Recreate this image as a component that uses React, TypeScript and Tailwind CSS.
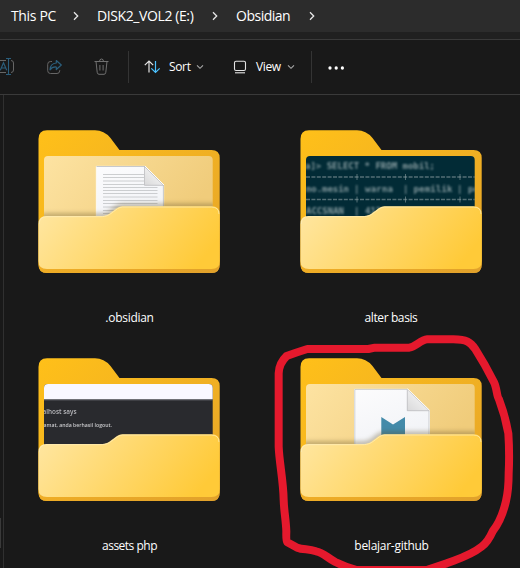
import React from "react";

type Kind = "text" | "terminal" | "dialog" | "markdown";

const FRONT =
  "M.5 94 Q.5 86 8.5 86 H62 C69 86 71 84 75 81 L79 78 Q81.500 76.300 84.500 76.300 H173.500 Q181.700 76.300 181.700 84.300";

function Preview({ kind }: { kind: Kind }) {
  if (kind === "terminal") {
    return (
      <g>
        <rect x="6" y="26" width="169" height="75" fill="#022b36" />
        <g
          className="blur-[0.9px]"
          fill="#a3b4b6"
          fillOpacity=".8"
          fontSize="9"
          fontWeight="bold"
          fontFamily="'DejaVu Sans Mono', monospace"
        >
          <text x="5" y="38.500" textLength="130" xmlSpace="preserve">{"a]> SELECT * FROM mobil;"}</text>
          <text x="6" y="61.500" textLength="43">no.mesin</text>
          <text x="65" y="61.500" textLength="28">warna</text>
          <text x="113.500" y="61.500" textLength="39">pemilik</text>
          <text x="168" y="61.500">pe</text>
          <text x="6" y="84" textLength="38">ACCSNAN</text>
          <text x="65" y="84">412</text>
          <text x="54" y="61.500">|</text>
          <text x="103" y="61.500">|</text>
          <text x="157" y="61.500">|</text>
          <text x="54" y="84">|</text>
        </g>
        <g className="blur-[0.7px]" stroke="#8a9da0" strokeOpacity=".6">
          <path d="M6 47H175M6 69.500H175" strokeDasharray="4 1.400" strokeWidth="1.300" />
          <path d="M57 44v6M105.500 44v6M160 44v6M57 66.500v6M105.500 66.500v6M160 66.500v6" />
        </g>
      </g>
    );
  }
  if (kind === "dialog") {
    return (
      <g>
        <rect x="6" y="26" width="169" height="75" fill="#292a2e" />
        <rect x="6" y="26" width="169" height="15.300" fill="#f9f8ff" />
        <path d="M6 41.800H175" stroke="#77777d" />
        <g className="blur-[0.35px]" fontFamily="'Open Sans', sans-serif" fontWeight="600">
          <text x="4.500" y="56.300" fontSize="6.500" textLength="34" lengthAdjust="spacingAndGlyphs" fill="#b8b8bc">alhost says</text>
          <text x="5.500" y="69" fontSize="5.500" textLength="68.500" lengthAdjust="spacingAndGlyphs" fill="#c9c9cc">amat, anda berhasil logout.</text>
        </g>
      </g>
    );
  }
  return (
    <g>
      <rect x="6" y="26" width="169" height="75" fill="url(#paper)" />
      {kind === "text" ? (
        <g>
          <path d="M58.300 36.300H107L125.700 55V100H58.300Z" fill="url(#sheet)" stroke="#fff" strokeWidth=".7" />
          <path d="M58.500 36.500H107M125.400 55V90" stroke="#b9bcc2" strokeWidth=".8" fill="none" />
          <path
            d="M65 44.500H106M65 47.500H106M65 51H106M65 54.500H106M65 57.500H119.500M65 60.500H119.500M65 63.500H119.500M65 67H119.500M65 70.500H119.500M65 73.500H119.500M65 77H119.500M65 80.500H80M65 83.500H75"
            stroke="#c6c8cb"
            strokeWidth=".9"
          />
          <path d="M106.500 36.500V55.300H125.500Z" fill="url(#fold)" stroke="#b4b4b7" strokeWidth=".7" />
          <path d="M107 36L126 55" stroke="#fff" strokeWidth=".9" />
        </g>
      ) : (
        <g>
          <path d="M54.500 31.300H107.500L129.500 52.700V100H54.500Z" fill="url(#sheet)" stroke="#fff" strokeWidth=".9" />
          <path d="M54.800 100V31.400H107M129 52.700V100" stroke="#b9bcc2" strokeWidth=".7" fill="none" />
          <path d="M107.300 31.400V52.700H129.300Z" fill="url(#fold)" stroke="#b4b4b7" strokeWidth=".7" />
          <path d="M107.500 30.800L129.600 52.300" stroke="#fff" strokeWidth=".9" />
          <path d="M81.300 59.100L93 66.600L105 59.100V90H81.300Z" fill="#438aa9" />
        </g>
      )}
    </g>
  );
}

function Folder({ kind }: { kind: Kind }) {
  return (
    <svg width="182" height="143" viewBox="0 0 182 143" className="block">
      <path
        d="M.5 9Q.5.3 9 .3H57Q66 .3 72.500 8L81.500 20H173.500Q181.700 20 181.700 28V134.500Q181.700 143 173.500 143H9Q.5 143 .5 134.500Z"
        fill="url(#back)"
      />
      <g clipPath="url(#window)">
        <Preview kind={kind} />
        {(kind === "text" || kind === "markdown") && (
          <path className="blur-[2.5px]" d={FRONT} fill="none" stroke="#5a4a20" strokeOpacity=".5" strokeWidth="4" />
        )}
      </g>
      <path d="M181.700 84V134.500Q181.700 143 173.500 143H9Q.5 143 .5 134.500V94Z" fill="url(#edge)" />
      <path d={FRONT + "V131Q181.700 139 173.500 139H9Q.5 139 .5 131Z"} fill="url(#front)" />
      <path d="M1.200 94Q1.200 86.700 8.500 86.700H62C69 86.700 71.500 84.700 75.400 81.700L79.500 78.700Q82 77 84.500 77H173.500Q181 77 181 84" fill="none" stroke="#fff0bd" strokeOpacity=".7" />
    </svg>
  );
}

function Defs() {
  return (
    <svg width="0" height="0" className="absolute" aria-hidden="true">
      <defs>
        <linearGradient id="back" x1="0" y1="0" x2="1" y2=".8">
          <stop offset="0" stopColor="#ffc019" />
          <stop offset="1" stopColor="#e8a728" />
        </linearGradient>
        <linearGradient id="front" x1="0" y1="76" x2="125" y2="178" gradientUnits="userSpaceOnUse">
          <stop offset="0" stopColor="#ffe7a4" />
          <stop offset="1" stopColor="#ffca38" />
        </linearGradient>
        <linearGradient id="edge">
          <stop offset="0" stopColor="#efad25" />
          <stop offset="1" stopColor="#e1a12b" />
        </linearGradient>
        <linearGradient id="paper" x1="0" y1="0" x2="1" y2=".35">
          <stop offset="0" stopColor="#fde3a2" />
          <stop offset="1" stopColor="#f0cc7b" />
        </linearGradient>
        <linearGradient id="sheet" x1="0" y1="0" x2=".4" y2="1">
          <stop offset="0" stopColor="#fcfcfd" />
          <stop offset="1" stopColor="#f0f2f6" />
        </linearGradient>
        <linearGradient id="fold" x1="0" y1="1" x2=".7" y2=".2">
          <stop offset="0" stopColor="#d9d9da" />
          <stop offset="1" stopColor="#f5f5f5" />
        </linearGradient>
        <clipPath id="window">
          <path d="M6 100V30Q6 26 10 26H170.700Q174.700 26 174.700 30V100Z" />
        </clipPath>
      </defs>
    </svg>
  );
}

function Crumb({ text, width, className }: { text: string; width: string; className: string }) {
  return (
    <span className={"shrink-0 whitespace-nowrap text-[14px] leading-[32px] text-white " + width + " " + className}>
      {text}
    </span>
  );
}

function ChevronRight({ className }: { className: string }) {
  return (
    <svg width="6" height="10" viewBox="0 0 6 10" className={"shrink-0 " + className} fill="none" stroke="#e8e8e8" strokeWidth="1.300">
      <path d="M1 1.300L4.700 5L1 8.700" />
    </svg>
  );
}

function ChevronDown() {
  return (
    <svg width="8" height="6" viewBox="0 0 8 6" className="shrink-0" fill="none" stroke="#a9a9a9" strokeWidth="1.100">
      <path d="M1 1.300L4 4.300L7 1.300" />
    </svg>
  );
}

const folders: { name: string; kind: Kind; spacing: string }[] = [
  { name: ".obsidian", kind: "text", spacing: "tracking-[-0.28px] pl-px" },
  { name: "alter basis", kind: "terminal", spacing: "tracking-[-0.4px]" },
  { name: "assets php", kind: "dialog", spacing: "tracking-[-0.5px] pl-px" },
  { name: "belajar-github", kind: "markdown", spacing: "tracking-[-0.27px] pl-px" },
];

export default function App() {
  return (
    <div className="relative flex h-[568px] w-[520px] flex-col overflow-hidden bg-[#191919] font-['Open_Sans','Noto_Sans',sans-serif]">
      <Defs />
      <nav className="flex h-8 shrink-0 items-center bg-[#2c2c2c] pl-[11px]">
        <Crumb text="This PC" width="w-[62px]" className="tracking-[-0.35px]" />
        <ChevronRight className="mr-[18px]" />
        <Crumb text="DISK2_VOL2 (E:)" width="w-[115px]" className="tracking-[-0.4px]" />
        <ChevronRight className="mr-[18px]" />
        <Crumb text="Obsidian" width="w-[73px]" className="tracking-[-0.5px]" />
        <ChevronRight className="" />
      </nav>
      <div className="h-[7px] shrink-0 bg-[#202020]" />
      <div className="flex h-14 shrink-0 items-center border-y border-[#3a3a3a] text-[12px] text-white">
        <svg width="15" height="18" viewBox="0 0 15 18" className="shrink-0" fill="none">
          <path d="M0 2.500H6M0 14.500H6M11 2.500Q13.500 2.500 13.500 5V12Q13.500 14.500 11 14.500" stroke="#666" />
          <path d="M6 .5H11M8.500 .5V16.500M6 16.500H11M.3 12.300L3.500 4.700L6.700 12.300M1.300 10H5.700" stroke="#2b5f7d" strokeWidth="1.100" />
        </svg>
        <svg width="16" height="16" viewBox="0 0 16 16" className="ml-8 shrink-0" fill="none">
          <path d="M5 2.500H3.500Q.700 2.500 .700 5.300V11.700Q.700 14.500 3.500 14.500H10Q12.700 14.500 12.700 11.700V11" stroke="#666" />
          <path d="M9.300 1.500L14.300 6L9.300 10.500V8Q5 7.700 3 10.800Q3.200 4.600 9.300 4Z" stroke="#2b5f7d" strokeWidth="1.200" strokeLinejoin="round" />
        </svg>
        <svg width="16" height="18" viewBox="0 0 16 18" className="ml-[31px] shrink-0" fill="none" stroke="#707070">
          <path d="M.5 3.500H14.500M5.500 3.500Q5.500 1 7.500 1Q9.500 1 9.500 3.500M2 3.500L3.200 14.300Q3.400 16.300 5 16.300H10Q11.600 16.300 11.800 14.300L13 3.500M5.900 7V12.500M9.100 7V12.500" />
        </svg>
        <span className="ml-[18px] h-8 w-px shrink-0 bg-[#343434]" />
        <svg width="17" height="16" viewBox="0 0 17 16" className="ml-[15px] shrink-0" fill="none" strokeWidth="1.200">
          <path d="M5 13.500V2M.8 6.200L5 2L9.200 6.200" stroke="#e4e4e4" />
          <path d="M11.500 2V13.500M7.300 9.300L11.500 13.500L15.700 9.300" stroke="#4cc2ff" />
        </svg>
        <span className="ml-[8px] w-[27px] shrink-0 tracking-[-0.35px]">Sort</span>
        <ChevronDown />
        <svg width="14" height="14" viewBox="0 0 14 14" className="ml-[29px] shrink-0" fill="none" stroke="#e4e4e4" strokeWidth="1.100">
          <rect x="1.500" y="1.200" width="11" height="9.300" rx="1.500" />
          <path d="M2 12.800H12" />
        </svg>
        <span className="ml-[9px] w-[31px] shrink-0 tracking-[-0.35px]">View</span>
        <ChevronDown />
        <span className="ml-4 h-8 w-px shrink-0 bg-[#343434]" />
        <svg width="18" height="4" viewBox="0 0 18 4" className="ml-4 mt-px shrink-0" fill="#fff">
          <circle cx="2" cy="2" r="1.650" />
          <circle cx="8.200" cy="2" r="1.650" />
          <circle cx="14.400" cy="2" r="1.650" />
        </svg>
      </div>
      <div className="flex min-h-0 flex-1">
        <aside className="flex w-1 shrink-0 flex-col border-r border-[#303030]">
          <div className="mt-[423px] h-[30px] w-px bg-[#3a3a3a]" />
        </aside>
        <main className="grid h-[473px] grid-cols-[262px_262px] grid-rows-[228px_228px] pl-[34px] pt-[35px]">
          {folders.map((f) => (
            <figure key={f.name} className="flex w-[182px] flex-col items-center">
              <Folder kind={f.kind} />
              <figcaption className={"mt-9 whitespace-nowrap text-[12px] leading-[18px] text-white " + f.spacing}>
                {f.name}
              </figcaption>
            </figure>
          ))}
        </main>
      </div>
      <svg
        width="260"
        height="238"
        viewBox="0 0 780 714"
        className="pointer-events-none absolute bottom-0 right-0"
        fill="none"
        stroke="#e5192d"
        strokeWidth="24"
        strokeLinecap="round"
        strokeLinejoin="round"
      >
        <path d="M290 720Q255 710 226 696C200 682 190 668 168 664C145 656 130 660 112 653L82 637Q78 632 79 605C78 570 72 545 71 510C70 450 58 400 56 350V130Q57 100 80 78Q110 67 142 57H325L345 53H448C470 49 480 30 502 28H580C620 28 632 37 645 56Q675 103 702 157C711 175 710 200 717 208C731 245 738 270 745 310Q749 370 746 430Q746 480 738 513Q725 570 698 604C690 622 682 637 665 650C630 678 590 688 560 700L500 720Z" />
      </svg>
    </div>
  );
}
